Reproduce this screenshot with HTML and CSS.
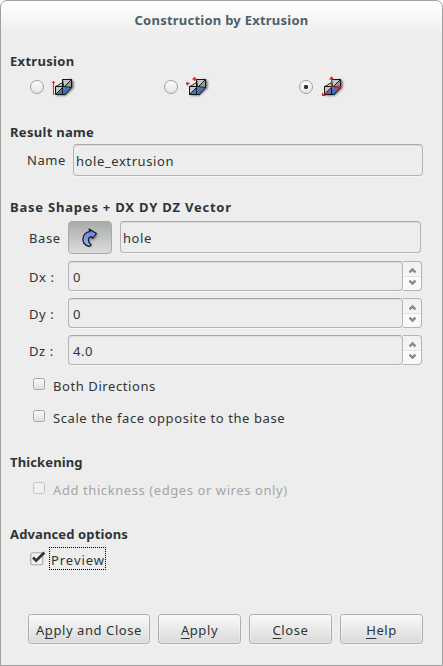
FILE: index.html
```html
<!DOCTYPE html>
<html lang="en">
<head>
<meta charset="utf-8">
<title>Construction by Extrusion</title>
<link rel="stylesheet" href="styles.css">
</head>
<body>
<svg width="0" height="0" class="defs">
  <defs>
    <linearGradient id="steel" x1="0" y1="0" x2="1" y2="1"><stop offset="0" stop-color="#5b93da"/><stop offset="1" stop-color="#2c5596"/></linearGradient>
    <linearGradient id="curve" x1="0" y1="0" x2="0" y2="1"><stop offset="0" stop-color="#5b78dc"/><stop offset="1" stop-color="#a9b8ef"/></linearGradient>
    <filter id="soft" x="-30%" y="-30%" width="160%" height="160%"><feGaussianBlur stdDeviation="0.8"/></filter>
    <g id="solid">
      <path d="M4 20.500H13.500L21.500 13V6L18 4Z" fill="#222" opacity=".7" filter="url(#soft)"/>
      <path d="M3.500 11.500L6 10.500L8.500 8.500L10.500 8V4.500H19.500V12.500L13.500 19.500H3.500Z" fill="#c6c8c8"/>
      <path d="M12.500 11.500L19.500 4.500V12.500L13.500 19.500H12.500Z" fill="#9a9ea2"/>
      <path d="M4 19L11.500 12L19 12.500L13.500 19.500Z" fill="url(#steel)"/>
      <path d="M3.500 11.500L6 10.500L8.500 8.500L10.500 8V4.500H19.500V12.500L13.500 19.500H3.500ZM3.500 11.500H12.500L19.500 4.500M10.500 4.500V19.500M3.500 19.500L11.500 11.500L10.500 4.500M11.500 11.500L19.500 12.500" fill="none" stroke="#151515" stroke-width="1"/>
    </g>
    <g id="arrows"><path d="M0.500 5.500L3.500 2.500L6.500 5.500M0.500 13.500L3.500 16.500L6.500 13.500" fill="none" stroke="#888" stroke-width="2.300"/></g>
  </defs>
</svg>
<main class="dialog">
  <header class="titlebar">Construction by Extrusion</header>

  <section class="extrusion">
    <h2>Extrusion</h2>
    <div class="modes">
      <div class="mode"><span class="radio"></span>
        <svg class="icon" width="24" height="24"><use href="#solid"/><path d="M1.500 6V20M0 7.500H3" stroke="#d93434" stroke-width="1.200" fill="none"/></svg></div>
      <div class="mode"><span class="radio"></span>
        <svg class="icon" width="24" height="24"><use href="#solid"/><path d="M0 8.500H3.500M1.500 7V10.500M6.500 4H10.500M8.500 2V6" stroke="#f02020" stroke-width="1.400" fill="none"/></svg></div>
      <div class="mode"><span class="radio on"></span>
        <svg class="icon" width="24" height="24"><use href="#solid"/><path d="M10.500 12V3M10.500 12H18M10.500 12L3 19.500" stroke="#e42020" fill="none"/><path d="M10.500 1L13 4.500H8ZM20.500 12L17 10V14ZM1 21V17.500L5 21Z" fill="#ee1a1a"/></svg></div>
    </div>
  </section>

  <section class="result">
    <h2>Result name</h2>
    <div class="row name-row"><span class="label">Name</span><div class="field">hole_extrusion</div></div>
  </section>

  <section class="shapes">
    <h2 class="wide">Base Shapes + DX DY DZ Vector</h2>
    <div class="row base-row">
      <span class="label">Base</span>
      <div class="pick"><svg width="18" height="22"><path d="M9 20L4 15.500L5 9L10 6.500V4L17 8.500L12 14V11L8.500 13L11 19Z" fill="#333" opacity=".5" filter="url(#soft)"/><path d="M8 19.500C3.500 18 1.500 14.500 2 11C2.500 7.500 4.500 5.200 9 4.500L8 2L15.500 6.500L11.500 11.500L10.500 9.500C8 10 7.200 11.500 7.400 13.500C7.600 15.500 8.200 16.500 10 18Z" fill="url(#curve)" stroke="#111426" stroke-width="1.200" stroke-linejoin="round"/></svg></div>
      <div class="field">hole</div>
    </div>
    <div class="row spin-row"><span class="label">Dx :</span><div class="field">0</div><div class="steps"><svg width="7" height="19"><use href="#arrows"/></svg></div></div>
    <div class="row spin-row"><span class="label">Dy :</span><div class="field">0</div><div class="steps"><svg width="7" height="19"><use href="#arrows"/></svg></div></div>
    <div class="row spin-row"><span class="label">Dz :</span><div class="field">4.0</div><div class="steps"><svg width="7" height="19"><use href="#arrows"/></svg></div></div>
    <div class="check both"><span class="box"></span>Both Directions</div>
    <div class="check scale"><span class="box"></span>Scale the face opposite to the base</div>
  </section>

  <section class="thickening">
    <h2 class="tight">Thickening</h2>
    <div class="check disabled"><span class="box"></span>Add thickness (edges or wires only)</div>
  </section>

  <section class="advanced">
    <h2 class="tight">Advanced options</h2>
    <div class="preview">
      <svg class="ticked" width="16" height="15"><rect x=".75" y="1.750" width="12" height="12" rx="2" fill="#f2f2f2" stroke="#aaa" stroke-width="1.200"/><path d="M3 6.500L6.200 9.700L14.300 1.500" fill="none" stroke="#2e3436" stroke-width="2.700"/></svg>
      <span class="focus">Preview</span>
    </div>
  </section>

  <footer class="buttons">
    <div class="button">A<u>p</u>ply and Close</div>
    <div class="button"><u>A</u>pply</div>
    <div class="button"><u>C</u>lose</div>
    <div class="button"><u>H</u>elp</div>
  </footer>
</main>
</body>
</html>
```

FILE: styles.css
```css
* { box-sizing: border-box; }
body {
  margin: 0;
  background: #fff;
  color: #2e3436;
  font: 13px/20px "Noto Sans", "Open Sans", sans-serif;
  letter-spacing: 0.58px;
}
.defs { position: absolute; }
.dialog {
  width: 443px;
  height: 666px;
  border: 1px solid #a1a1a1;
  border-radius: 7px 7px 0 0;
  background: linear-gradient(#fff 0, #ededed 35px);
  overflow: hidden;
}
.titlebar {
  height: 40px;
  line-height: 38px;
  text-align: center;
  font-weight: bold;
  letter-spacing: 0.24px;
  color: #4e5f68;
}
h2 { margin: 0 0 0 9px; font-size: 13px; line-height: 20px; letter-spacing: 0.3px; }
h2.wide { letter-spacing: 0.79px; }
h2.tight { letter-spacing: 0.13px; }
.extrusion { margin-top: 10px; }
.modes { display: grid; grid-template-columns: 134px 135px 1fr; margin: 4px 0 0 29px; }
.mode { display: flex; align-items: center; height: 24px; }
.icon { margin-left: 8px; }
.radio {
  width: 14px;
  height: 14px;
  border: 1px solid #a0a0a0;
  border-radius: 50%;
  background: linear-gradient(#fefefe, #e4e4e4);
}
.radio.on { background: radial-gradient(circle, #2e3436 0 1.8px, transparent 2.5px), linear-gradient(#fefefe, #e4e4e4); }

.result { margin-top: 23px; }
.row { display: flex; }
.name-row { height: 32px; margin: 2px 19px 0 26px; line-height: 33px; }
.name-row .label { width: 46px; }
.field {
  flex: 1;
  padding-left: 2px;
  border: 1px solid #b4b4b4;
  border-top-color: #a8a8a8;
  border-radius: 4px;
  box-shadow: inset 0 1px #dedede, 0 1px #f6f6f6;
  line-height: 32px;
}
.shapes { margin-top: 21px; }
.base-row { height: 33px; margin: 4px 21px 0 28px; line-height: 34px; }
.base-row .label, .spin-row .label { width: 39px; }
.pick {
  display: flex;
  align-items: center;
  justify-content: center;
  width: 44px;
  height: 33px;
  margin-right: 8px;
  border: 1px solid #a9aaa9;
  border-radius: 4px;
  background: linear-gradient(#a8aca8, #dcdcdc);
}
.base-row .field { height: 32px; }
.spin-row { height: 30px; margin: 7px 20px 0 28px; line-height: 32px; }
.spin-row .field { padding-left: 4px; line-height: 30px; }
.steps {
  display: flex;
  align-items: center;
  justify-content: center;
  width: 19px;
  border: 1px solid #b4b4b4;
  border-left: 0;
  border-radius: 0 4px 4px 0;
  background: linear-gradient(#f0f0f0, #f6f6f6 50%, #e2e2e2 50%, #e2e2e2 53%, #fcfcfc 53%, #f8f8f8);
}
.check { display: flex; height: 20px; margin-left: 32px; }
.box {
  width: 12px;
  height: 12px;
  margin: 2px 8px 0 0;
  border: 1px solid #a4a4a4;
  border-radius: 2.5px;
  background: linear-gradient(#fbfbfb, #dfdfdf);
}
.both { margin-top: 11px; }
.scale { margin-top: 12px; }
.thickening { margin-top: 24px; }
.disabled { margin-top: 8px; color: #a4a5a5; }
.disabled .box { border-color: #c4c4c4; background: #f0f0f0; }
.advanced { margin-top: 24px; }
.preview { display: flex; height: 23px; margin: 3px 0 0 29px; }
.ticked { margin: 4px 3px 0 0; }
.focus {
  width: 57px;
  height: 23px;
  padding-left: 1px;
  border: 1px dotted #000;
  line-height: 24px;
  letter-spacing: 0.95px;
}
.buttons { display: grid; grid-template-columns: 122px 83px 83px 83px; gap: 8px; margin: 44px 0 0 27px; }
.button {
  height: 30px;
  border: 1px solid #aeaeae;
  border-radius: 3.5px;
  background: linear-gradient(#f9f9f9, #dadada);
  box-shadow: inset 0 0 0 1px rgba(255, 255, 255, 0.35), 0 1px #f5f5f5;
  line-height: 31px;
  text-align: center;
}
u { text-underline-offset: 3px; text-decoration-thickness: 1px; text-decoration-skip-ink: none; }
```
